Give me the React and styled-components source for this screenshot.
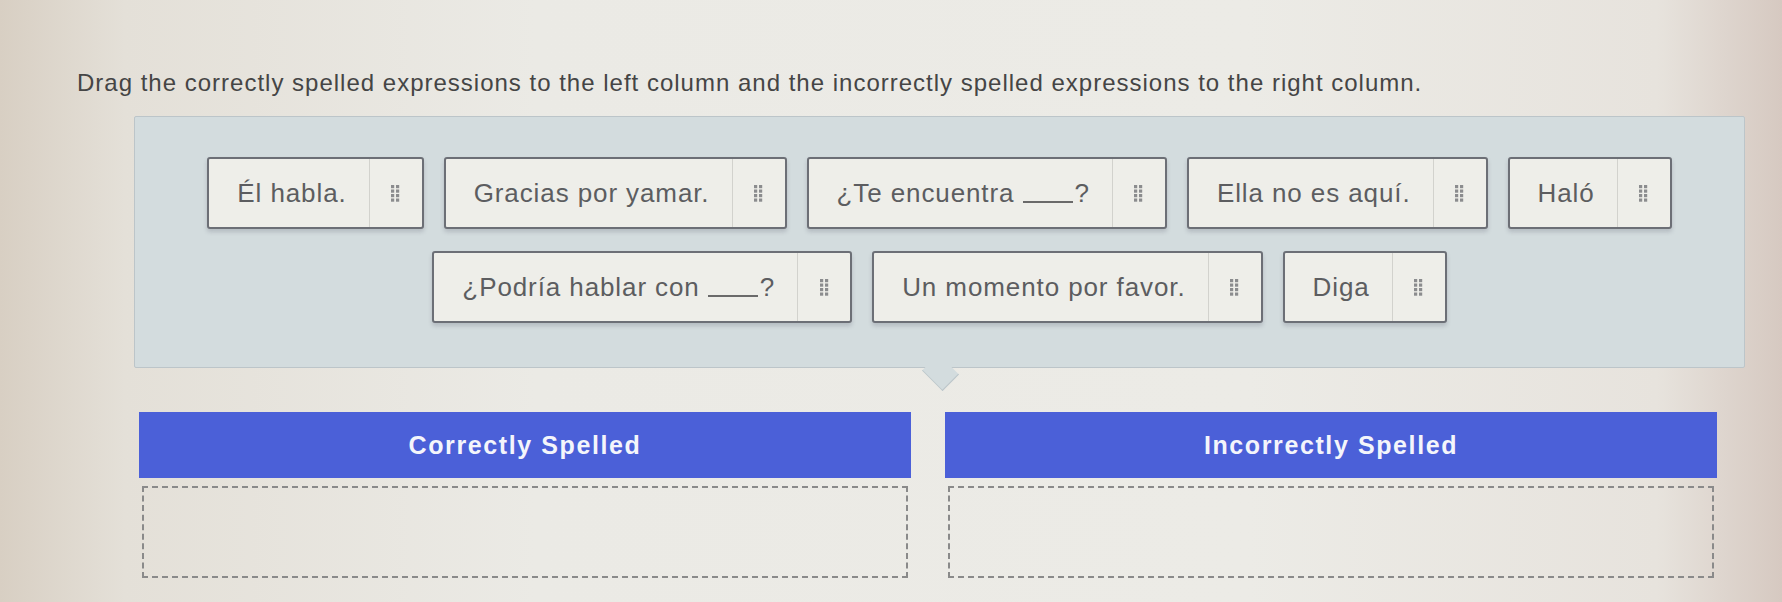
import React from 'react';
import styled, { createGlobalStyle } from 'styled-components';

const rows = [
	[
		{ id: 'a', text: 'Él habla.' },
		{ id: 'b', text: 'Gracias por yamar.' },
		{ id: 'c', text: '¿Te encuentra', blank: true },
		{ id: 'd', text: 'Ella no es aquí.' },
		{ id: 'e', text: 'Haló' },
	],
	[
		{ id: 'f', text: '¿Podría hablar con', blank: true },
		{ id: 'g', text: 'Un momento por favor.' },
		{ id: 'h', text: 'Diga' },
	],
];

function App() {
	return (
		<>
			<GlobalStyle />
			<Page>
				<Prompt>
					Drag the correctly spelled expressions to the left column and the
					incorrectly spelled expressions to the right column.
				</Prompt>
				<Bank>
					{rows.map((row, i) => (
						<Row key={i}>
							{row.map((tile) => (
								<Tile key={tile.id} {...tile} />
							))}
						</Row>
					))}
				</Bank>
				<Columns>
					<Column>
						<Header>Correctly Spelled</Header>
						<DropZone />
					</Column>
					<Column>
						<Header>Incorrectly Spelled</Header>
						<DropZone />
					</Column>
				</Columns>
			</Page>
		</>
	);
}

const Tile = ({ text, blank }) => (
	<TileBox>
		<Label>
			{text}
			{blank && (
				<>
					{' '}
					<Blank />?
				</>
			)}
		</Label>
		<Handle>
			<Grip />
		</Handle>
	</TileBox>
);

const Grip = () => (
	<svg width='9' height='17' viewBox='0 0 9 17'>
		{[0, 1, 2, 3].map((r) =>
			[0, 1].map((c) => (
				<rect key={`${r}${c}`} x={c * 5} y={r * 4.5} width='3.2' height='3.2' fill='#8b8c8e' />
			))
		)}
	</svg>
);

const GlobalStyle = createGlobalStyle`
	html, body {
		margin: 0;
		height: 100%;
	}
	body {
		font-family: "Liberation Sans", Arial, sans-serif;
		background: linear-gradient(90deg, #d8cfc3 0%, #e4e0d8 7%, #ebeae5 30%, #ecebe6 70%, #e7e3dd 93%, #d6c9c1 100%);
	}
`;

const Page = styled.div`
	padding-top: 69px;
	padding-left: 134px;
	width: 1611px;
`;

const Prompt = styled.div`
	margin-left: -57px;
	font-size: 24px;
	line-height: 28px;
	letter-spacing: 1px;
	color: #454545;
	white-space: nowrap;
`;

const Bank = styled.div`
	position: relative;
	margin-top: 19px;
	padding: 40px 0 44px;
	display: flex;
	flex-direction: column;
	gap: 22px;
	background: #d3dcde;
	border: 1px solid #bcc5c9;
	border-radius: 2px;

	&::after {
		content: '';
		position: absolute;
		left: 50%;
		bottom: -20px;
		width: 28px;
		height: 28px;
		margin-left: -14px;
		background: #d3dcde;
		border-right: 1px solid #bcc5c9;
		border-bottom: 1px solid #bcc5c9;
		transform: rotate(45deg) scaleY(0.8);
	}
`;

const Row = styled.div`
	display: flex;
	justify-content: center;
	gap: 20px;
`;

const TileBox = styled.div`
	display: flex;
	align-items: stretch;
	height: 68px;
	background: #eeeee9;
	border: 2px solid #6c6f76;
	border-radius: 3px;
	box-shadow: 0 3px 4px rgba(60, 60, 80, 0.2);
`;

const Label = styled.div`
	display: flex;
	align-items: center;
	padding: 0 22px 0 28px;
	font-size: 26px;
	letter-spacing: 0.9px;
	color: #5c5d60;
	white-space: pre;
`;

const Blank = styled.span`
	display: inline-block;
	width: 50px;
	height: 18px;
	margin-right: 2px;
	border-bottom: 2px solid #6a6a6a;
`;

const Handle = styled.div`
	display: flex;
	align-items: center;
	justify-content: center;
	width: 52px;
	border-left: 1px solid #d2d2cd;
`;

const Columns = styled.div`
	display: grid;
	grid-template-columns: 1fr 1fr;
	gap: 34px;
	width: 1578px;
	margin: 44px 0 0 5px;
`;

const Column = styled.div`
	display: flex;
	flex-direction: column;
	gap: 8px;
`;

const Header = styled.div`
	display: flex;
	align-items: center;
	justify-content: center;
	height: 66px;
	background: #4b60d8;
	color: #f4f5fb;
	font-size: 25px;
	font-weight: 700;
	letter-spacing: 1.6px;
`;

const DropZone = styled.div`
	height: 88px;
	margin: 0 3px;
	border: 2px dashed #8a8a8a;
`;

export default App;
